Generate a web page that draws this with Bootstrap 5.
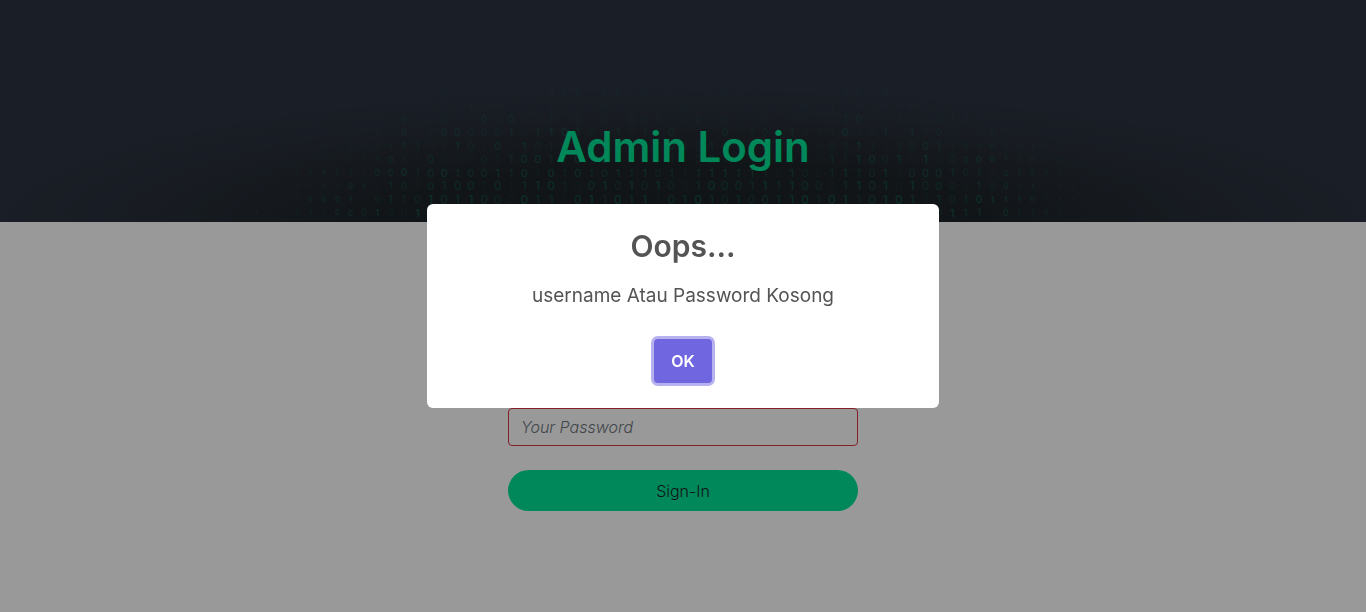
<!DOCTYPE html>
<html lang="id">
<head>
<meta charset="utf-8">
<meta name="viewport" content="width=device-width, initial-scale=1">
<title>Admin Login</title>
<link rel="stylesheet" href="https://cdn.jsdelivr.net/npm/bootstrap@5.3.0/dist/css/bootstrap.min.css">
<style>
  body { font-family: Inter, "Open Sans", sans-serif; background: #fff; color: #545454; }
  .hero {
    height: 222px;
    padding-top: 123px;
    overflow: hidden;
    background: radial-gradient(ellipse 50% 60% at 50% 100%, #1c2125 0%, #1e2429 45%, #272e38 75%, #2b3341 100%) #2b3341;
  }
  .hero-title { font-size: 42px; line-height: 48px; font-weight: 600; color: #00e396; }
  .rain { width: 1366px; height: 222px; font: 500 12px Inter, sans-serif; fill: #00c896; }
  .login-form { width: 350px; max-width: 100%; padding-top: 100px; }
  .field { height: 38px; border: 1px solid #dc3545; border-radius: 4px; background: #fff; font-weight: 300; }
  .field::placeholder { color: #6c757d; font-style: italic; }
  .btn-sign { height: 41px; padding: 0; background: #00e396; color: #212529; font-size: 16px; font-weight: 300; }
  .modal-backdrop.dim { opacity: .4; }
  .alert-dialog { max-width: 512px; }
  .alert-title { font-size: 30px; line-height: 36px; font-weight: 600; }
  .alert-text { font-size: 19px; line-height: 32px; }
  .btn-ok { width: 58px; height: 44px; margin: 27px 0 1px; padding: 0; background: #7066e0; color: #fff; font-weight: 600; border-radius: 4px; box-shadow: 0 0 0 3px rgba(112, 102, 224, .5); }
</style>
</head>
<body>
<header class="hero position-relative text-center">
  <svg class="rain position-absolute top-0 start-50 translate-middle-x" viewBox="0 0 1366 222" aria-hidden="true" text-anchor="middle"></svg>
  <h1 class="hero-title position-relative m-0">Admin Login</h1>
</header>
<main class="container d-flex justify-content-center">
  <form class="login-form">
    <label class="visually-hidden" for="username">Username</label>
    <input class="field form-control mb-5" id="username" type="text">
    <label class="visually-hidden" for="password">Password</label>
    <input class="field form-control mb-4" id="password" type="password" placeholder="Your Password">
    <button class="btn btn-sign rounded-pill w-100" type="submit">Sign-In</button>
  </form>
</main>
<div class="modal-backdrop dim"></div>
<div class="modal d-block" tabindex="-1" role="dialog" aria-modal="true" aria-labelledby="alert-title">
  <div class="modal-dialog modal-dialog-centered alert-dialog">
    <div class="modal-content border-0 rounded-2 text-center align-items-center p-4">
      <h2 class="alert-title m-0" id="alert-title">Oops...</h2>
      <p class="alert-text mt-3 mb-0">username Atau Password Kosong</p>
      <button class="btn btn-ok" type="button">OK</button>
    </div>
  </div>
</div>
<script src="https://cdn.jsdelivr.net/npm/bootstrap@5.3.0/dist/js/bootstrap.bundle.min.js"></script>
<script>
  // Each row of digits is paired with a row of brightness levels, 0 to 5.
  const rows = [
    ['00000000000000000100110001000010110011011100100000000000000000000',
     '00000000000000111111112220221111101111000110220200000000000000000'],
    ['00000000001100111100011111010010010001100001110000011001000000000',
     '00000111111111112221122111202022211111112212221112121110111100000'],
    ['00000000000010001010111101000010001011011110101010001000000000000',
     '00000000000300200313112020202221121211101100330121122221100000000'],
    ['00000001110000000001011010110110000011011011010111100000110000000',
     '00001020011301332223034431031213000312213111411303121012111000000'],
    ['10000100011110110101101001101100101011001110111110011010101100000',
     '01100111122321142131422321203313223112132112242122332233213110000'],
    ['00000000110110000011001001001001100101001101110010100000100101000',
     '00110001233213111223443141423122023213223113244241512344323221000'],
    ['00001011100010010011010101011101111111101001110110001010010000011',
     '11122322133423433343414243343423134434314213433413433231332221111'],
    ['01010110101010100101110100101010010001111000110101000010011111000',
     '00121323313213333131344213424242134333434321343414232132323122110'],
    ['00100001101101011000011101101110101010011010110101110101110111010',
     '11223333023224334321433134243413343232334424423443132344433222112'],
    ['00101000010011100110101001011010011010011010110101101110011010110',
     '21122133241143211111111111111111111111111111111111114330322221110']
  ];
  const rain = document.querySelector('.rain');
  const pitch = 13.37;
  rows.forEach(([digits, levels], r) => {
    [...digits].forEach((digit, c) => {
      const level = +levels[c];
      if (!level) return;
      const x = 257 + c * pitch;
      const edge = Math.min(1, (500 - Math.abs(x - 683)) / 260);
      const size = Math.round((9 + r * .4) * edge);
      const t = document.createElementNS('http://www.w3.org/2000/svg', 'text');
      t.setAttribute('x', x);
      t.setAttribute('y', 92.5 + r * pitch + size * .36);
      t.setAttribute('style', `font-size:${size}px`);
      t.setAttribute('opacity', level * (.028 + r * .004));
      t.textContent = digit;
      rain.append(t);
    });
  });
</script>
</body>
</html>
